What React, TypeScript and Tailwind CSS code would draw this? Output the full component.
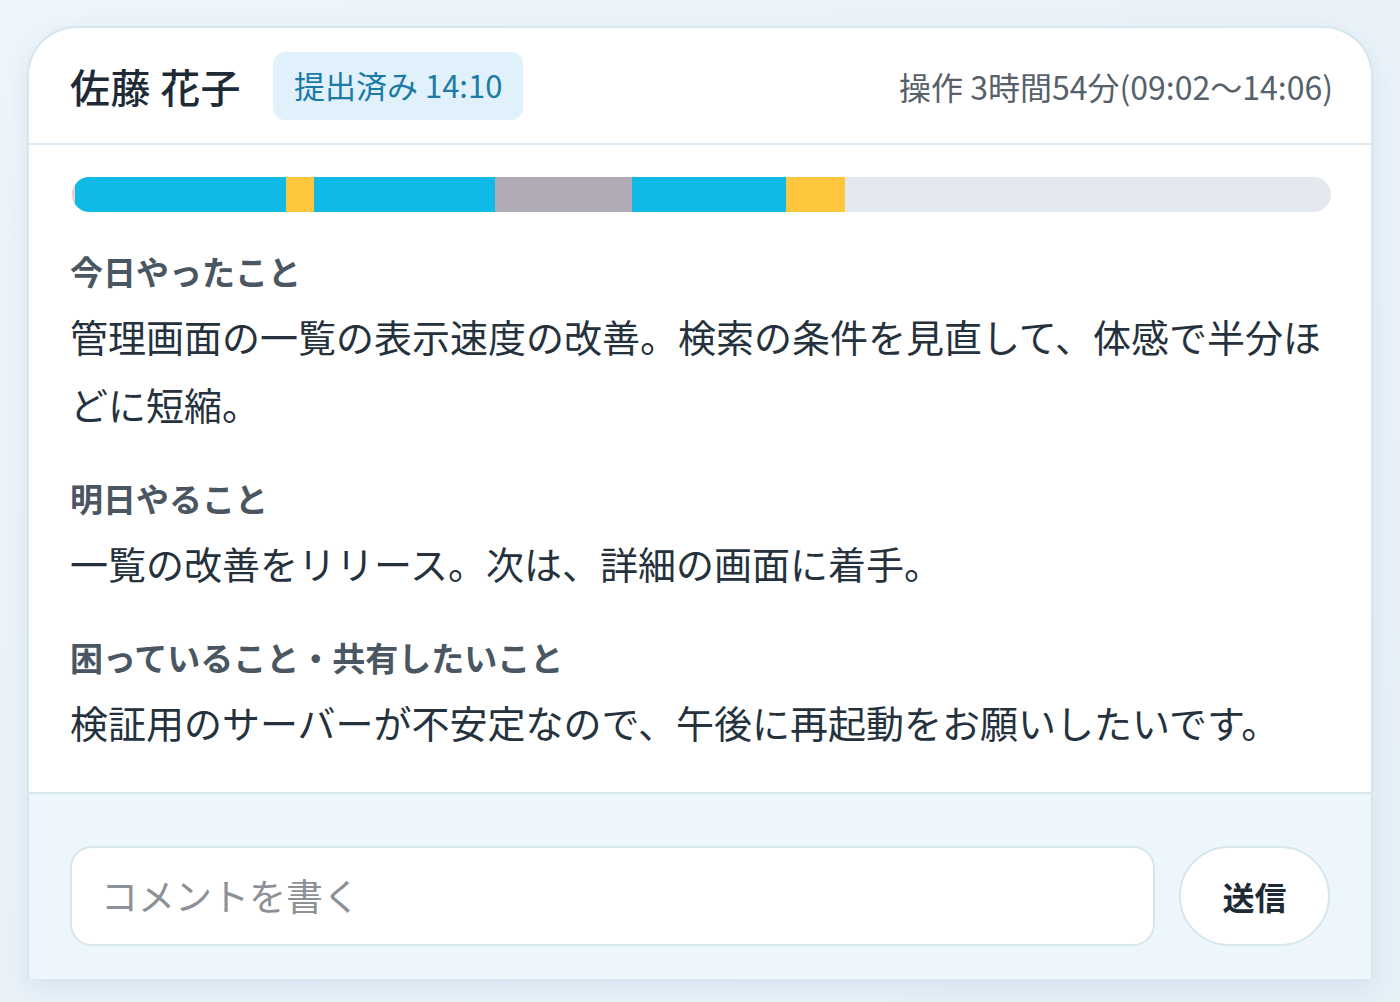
import React from 'react';

const segments = [
  { w: 211, c: 'bg-[#10bae6]' },
  { w: 28, c: 'bg-[#fdc63d]' },
  { w: 181, c: 'bg-[#10bae6]' },
  { w: 137, c: 'bg-[#b1abb5]' },
  { w: 154, c: 'bg-[#10bae6]' },
  { w: 59, c: 'bg-[#fdc63d]' },
];

const sections = [
  {
    title: '今日やったこと',
    body: '管理画面の一覧の表示速度の改善。検索の条件を見直して、体感で半分ほどに短縮。',
  },
  {
    title: '明日やること',
    body: '一覧の改善をリリース。次は、詳細の画面に着手。',
  },
  {
    title: '困っていること・共有したいこと',
    body: '検証用のサーバーが不安定なので、午後に再起動をお願いしたいです。',
  },
];

export default function App() {
  return (
    <div
      className="w-[1400px] h-[1002px] overflow-hidden bg-gradient-to-br from-[#eef5fb] to-[#e6f0f7] pt-[26px] px-[27px]"
      style={{ fontFamily: '"Noto Sans CJK JP", "Noto Sans", sans-serif' }}
    >
      <div className="bg-white rounded-t-[50px] border-2 border-b-0 border-[#d6e6ef] shadow-[0_8px_24px_rgba(120,160,190,0.18)] overflow-hidden">
        {/* Header */}
        <div className="h-[117px] flex items-center pl-[41px] pr-[38px] border-b-2 border-[#d9e8f1]">
          <div className="text-[40px] font-medium text-[#1e2b36] tracking-[0.01em]">佐藤 花子</div>
          <div className="ml-[32px] h-[68px] px-[21px] flex items-center rounded-[12px] bg-[#e1f1fb] text-[#1b7aa6] text-[31px]">
            提出済み 14:10
          </div>
          <div className="ml-auto text-[32px] text-[#56616b]">操作 3時間54分(09:02〜14:06)</div>
        </div>

        {/* Body */}
        <div className="pl-[41px] pr-[38px] pt-[32px] pb-[36px]">
          <div className="h-[35px] flex rounded-full overflow-hidden bg-[#e4e9ef] ml-[2px] mr-[2px]">
            <div className="w-[3px] bg-[#f7c9c9]" />
            {segments.map((s, i) => (
              <div key={i} className={s.c} style={{ width: s.w }} />
            ))}
          </div>

          {sections.map((s, i) => (
            <div key={i} className={i === 0 ? 'mt-[35px]' : 'mt-[36px]'}>
              <div className="text-[33px] leading-[48px] font-bold text-[#4a5661]">{s.title}</div>
              <div className="mt-[7px] text-[38px] leading-[68px] text-[#25323d]">{s.body}</div>
            </div>
          ))}
        </div>

        {/* Footer */}
        <div className="bg-[#edf6fb] border-t-2 border-[#d6e6ef] pt-[52px] pb-[33px] pl-[41px] pr-[41px] flex items-center gap-[24px]">
          <div className="flex-1 h-[100px] rounded-[22px] bg-white border-2 border-[#d5e6ef] flex items-center px-[29px]">
            <span className="text-[37px] text-[#8b9196]">コメントを書く</span>
          </div>
          <div className="w-[151px] h-[100px] rounded-full bg-white border-2 border-[#d5e6ef] flex items-center justify-center">
            <span className="text-[32px] font-bold text-[#1e2b36]">送信</span>
          </div>
        </div>
      </div>
    </div>
  );
}
